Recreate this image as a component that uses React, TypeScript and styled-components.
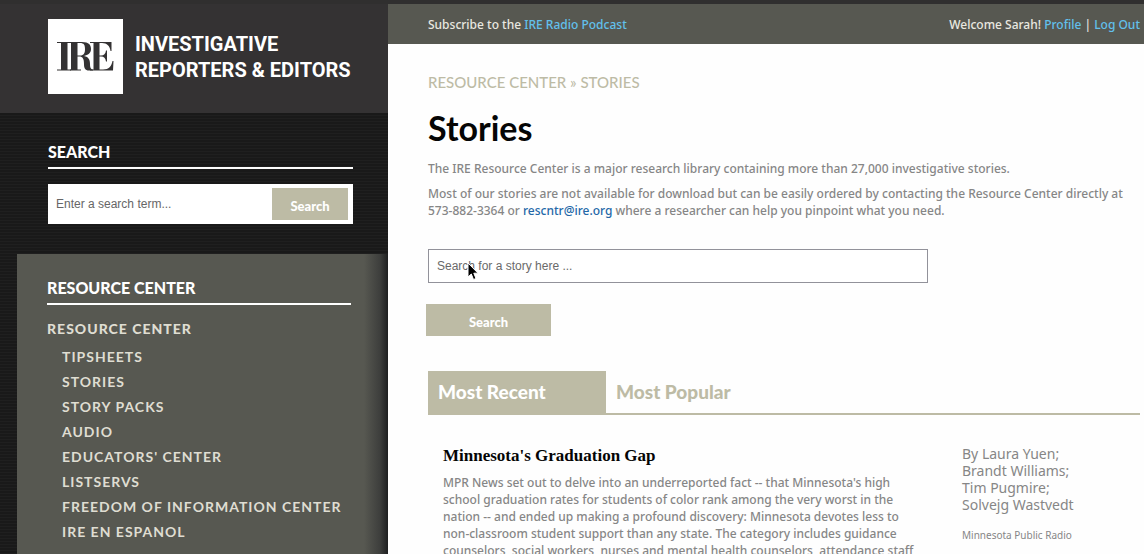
import React from "react";
import styled, { createGlobalStyle } from "styled-components";

const khaki = "#bdbba5";
const olive = "#575851";
const heading = `Lato, "Open Sans", sans-serif`;
const ui = `"Noto Sans", "Open Sans", sans-serif`;
const field = `"Liberation Sans", Arial, sans-serif`;

const GlobalStyle = createGlobalStyle`
  *, *::before, *::after { box-sizing: border-box; }
  body {
    margin: 0;
    background: #1b1b1b;
    color: #868686;
    font: 400 12px/17px ${ui};
  }
  h1, h2, h3, p, ul { margin: 0; padding: 0; }
  ul { list-style: none; }
  a { text-decoration: none; }
  input, button { border: 0; border-radius: 0; margin: 0; }
`;

const Page = styled.div`
  display: grid;
  grid-template-columns: 388px minmax(0, 1fr);
  min-height: 100vh;
  border-top: 4px solid #302f2f;
`;

const Sidebar = styled.aside`
  display: flex;
  flex-direction: column;
  background-color: #1a1a1a;
  background-image: repeating-linear-gradient(180deg, #1f1f1f 0 1px, #191919 1px 3px);
`;

const Brand = styled.a`
  display: flex;
  gap: 12px;
  height: 109px;
  padding: 15px 0 0 48px;
  background: #343233;
  color: #fff;
`;

const BrandMark = styled.span`
  display: grid;
  flex: none;
  place-items: center;
  width: 75px;
  height: 75px;
  background: #fff;
`;

const BrandName = styled.span`
  padding-top: 12px;
  font: 700 20px/26px Roboto, sans-serif;
  white-space: nowrap;
`;

const SearchBlock = styled.section`
  padding: 28px 35px 30px 48px;
`;

const SideTitle = styled.h2`
  padding-bottom: 4px;
  border-bottom: 2px solid #fff;
  color: #fff;
  font: 900 16px/22px ${heading};
`;

const SiteSearch = styled.form`
  display: flex;
  margin-top: 15px;
  padding: 4px 5px 4px 0;
  background: #fff;
`;

const SiteInput = styled.input`
  flex: 1;
  min-width: 0;
  height: 32px;
  padding: 0 8px;
  background: transparent;
  color: #666;
  font: 400 12px/16px ${field};
  outline: none;
  &::placeholder { color: #666; opacity: 1; }
`;

const Button = styled.button<{ $wide?: boolean }>`
  width: ${(p) => (p.$wide ? 125 : 76)}px;
  height: 32px;
  padding: 3px 0 0;
  background: ${khaki};
  color: #fff;
  font: 900 13px/16px ${heading};
`;

const SectionPanel = styled.nav`
  flex: 1;
  margin-left: 17px;
  padding: 23px 37px 10px 30px;
  background: linear-gradient(90deg, transparent calc(100% - 24px), #3d3e3c calc(100% - 8px), #1e1f20 100%), ${olive};
`;

const SectionLink = styled.a`
  display: block;
  margin-top: 12px;
  color: #dfddd2;
  font: 900 14px/24px ${heading};
  letter-spacing: 1px;
`;

const SubLinks = styled.ul`
  padding: 3px 0 0 15px;
`;

const SubLink = styled.a`
  display: block;
  color: #dfddd2;
  font: 700 14px/25px ${heading};
  letter-spacing: 1px;
  white-space: nowrap;
`;

const Main = styled.main`
  background: #fefefe;
`;

const TopBar = styled.header`
  display: flex;
  justify-content: space-between;
  height: 40px;
  padding: 12px 4px 0 40px;
  background: ${olive};
  color: #e9e8e0;
  font-weight: 500;
`;

const BarLink = styled.a`
  color: #62c0ec;
`;

const Content = styled.div`
  padding: 28px 4px 0 40px;
`;

const Crumbs = styled.p`
  color: ${khaki};
  font: 500 15px/20px ${heading};
  a { color: inherit; }
`;

const PageTitle = styled.h1`
  margin-top: 15px;
  color: #050505;
  font: 700 34px/42px ${heading};
`;

const Intro = styled.div`
  display: grid;
  gap: 8px;
  margin-top: 11px;
  font-weight: 500;
`;

const Phone = styled.span`
  white-space: nowrap;
`;

const MailLink = styled.a`
  color: #2468a8;
`;

const StorySearch = styled.form`
  margin-top: 30px;
`;

const StoryField = styled.div`
  position: relative;
  max-width: 500px;
  margin-bottom: 21px;
`;

const StoryInput = styled.input`
  display: block;
  width: 100%;
  height: 34px;
  padding: 0 8px;
  border: 1px solid #92929a;
  background: #fff;
  color: #666;
  font: 400 12px/16px ${field};
  outline: none;
  &::placeholder { color: #6a6a6a; opacity: 1; }
`;

const Pointer = styled.svg`
  position: absolute;
  top: 14px;
  left: 39px;
  pointer-events: none;
`;

const StoryActions = styled.div`
  margin-left: -2px;
`;

const Tabs = styled.div`
  display: flex;
  margin-top: 35px;
  border-bottom: 2px solid ${khaki};
`;

const Tab = styled.button<{ $active?: boolean }>`
  width: 178px;
  height: 42px;
  padding: 0 10px;
  background: ${(p) => (p.$active ? khaki : "transparent")};
  color: ${(p) => (p.$active ? "#fff" : khaki)};
  font: 900 19px/24px ${heading};
  text-align: left;
`;

const Story = styled.article`
  display: grid;
  grid-template-columns: minmax(0, 475fr) minmax(0, 178fr);
  gap: 44px;
  padding: 30px 0 0 15px;
`;

const StoryTitle = styled.h3`
  margin-bottom: 7px;
  color: #050505;
  font: 700 17px/22px "Liberation Serif", "Times New Roman", serif;
`;

const Summary = styled.p`
  font-weight: 500;
`;

const Authors = styled.p`
  font-size: 14px;
`;

const Outlet = styled.p`
  margin-top: 14px;
  font-size: 10px;
`;

const subsections = [
  "TIPSHEETS",
  "STORIES",
  "STORY PACKS",
  "AUDIO",
  "EDUCATORS' CENTER",
  "LISTSERVS",
  "FREEDOM OF INFORMATION CENTER",
  "IRE EN ESPANOL",
];

const authors = ["By Laura Yuen;", "Brandt Williams;", "Tim Pugmire;", "Solvejg Wastvedt"];

function Monogram() {
  return (
    <svg width="57" height="30" viewBox="0 0 57 30" fill="#343233" aria-hidden="true">
      <path d="M0 0H14V1H10.500V27.500H14V28.500H0V27.500H4V1H0Z" />
      <path d="M13 0H25C32 0 34 3 34 7C34 11 31 13 27 14C32 15 33 18 33 22C33 26 34 27.500 36 27.500V28.500H32C28 28.500 27 26 27 22C27 17 26 14.500 22 14.500H20.500V27.500H24V28.500H13V27.500H14V1H13ZM20.500 1V13.500H23C27 13.500 28 11 28 7C28 3 27 1 23 1Z" />
      <path d="M33 0H54.500V9H53.500C53 4 50 1 45 1H42.500V13.500H44C47 13.500 48.500 12 49 8.500H50V19.500H49C48.500 16 47 14.500 44 14.500H42.500V27.500H46C52 27.500 54.500 24 55.500 19H56.500L56 28.500H33V27.500H36.500V1H33Z" />
    </svg>
  );
}

export default function App() {
  return (
    <>
      <GlobalStyle />
      <Page>
        <Sidebar>
          <Brand href="#" aria-label="Investigative Reporters & Editors">
            <BrandMark>
              <Monogram />
            </BrandMark>
            <BrandName>
              INVESTIGATIVE
              <br />
              REPORTERS &amp; EDITORS
            </BrandName>
          </Brand>
          <SearchBlock>
            <SideTitle>SEARCH</SideTitle>
            <SiteSearch onSubmit={(e) => e.preventDefault()}>
              <SiteInput type="text" aria-label="Search" placeholder="Enter a search term..." />
              <Button type="submit">Search</Button>
            </SiteSearch>
          </SearchBlock>
          <SectionPanel>
            <SideTitle>RESOURCE CENTER</SideTitle>
            <SectionLink href="#">RESOURCE CENTER</SectionLink>
            <SubLinks>
              {subsections.map((name) => (
                <li key={name}>
                  <SubLink href="#">{name}</SubLink>
                </li>
              ))}
            </SubLinks>
          </SectionPanel>
        </Sidebar>
        <Main>
          <TopBar>
            <span>
              Subscribe to the <BarLink href="#">IRE Radio Podcast</BarLink>
            </span>
            <span>
              Welcome Sarah! <BarLink href="#">Profile</BarLink> | <BarLink href="#">Log Out</BarLink>
            </span>
          </TopBar>
          <Content>
            <Crumbs>
              <a href="#">RESOURCE CENTER</a> » <a href="#">STORIES</a>
            </Crumbs>
            <PageTitle>Stories</PageTitle>
            <Intro>
              <p>
                The IRE Resource Center is a major research library containing more than 27,000
                investigative stories.
              </p>
              <p>
                Most of our stories are not available for download but can be easily ordered by
                contacting the Resource Center directly at <Phone>573-882-3364</Phone> or{" "}
                <MailLink href="mailto:rescntr@ire.org">rescntr@ire.org</MailLink> where a
                researcher can help you pinpoint what you need.
              </p>
            </Intro>
            <StorySearch onSubmit={(e) => e.preventDefault()}>
              <StoryField>
                <StoryInput
                  type="text"
                  aria-label="Search for a story"
                  placeholder="Search for a story here ..."
                />
                <Pointer width="14" height="19" viewBox="0 0 14 19" aria-hidden="true">
                  <path
                    d="M1 0V14L4.300 11L6.500 16.500L9 15.500L6.800 10.200H11Z"
                    fill="#000"
                    stroke="#fff"
                    strokeWidth="1"
                  />
                </Pointer>
              </StoryField>
              <StoryActions>
                <Button type="submit" $wide>
                  Search
                </Button>
              </StoryActions>
            </StorySearch>
            <Tabs role="tablist">
              <Tab type="button" role="tab" aria-selected="true" $active>
                Most Recent
              </Tab>
              <Tab type="button" role="tab" aria-selected="false">
                Most Popular
              </Tab>
            </Tabs>
            <Story>
              <div>
                <StoryTitle>Minnesota's Graduation Gap</StoryTitle>
                <Summary>
                  MPR News set out to delve into an underreported fact -- that Minnesota's high
                  school graduation rates for students of color rank among the very worst in the
                  nation -- and ended up making a profound discovery: Minnesota devotes less to
                  non-classroom student support than any state. The category includes guidance
                  counselors, social workers, nurses and mental health counselors, attendance staff
                </Summary>
              </div>
              <div>
                <Authors>
                  {authors.map((name) => (
                    <React.Fragment key={name}>
                      {name}
                      <br />
                    </React.Fragment>
                  ))}
                </Authors>
                <Outlet>Minnesota Public Radio</Outlet>
              </div>
            </Story>
          </Content>
        </Main>
      </Page>
    </>
  );
}
